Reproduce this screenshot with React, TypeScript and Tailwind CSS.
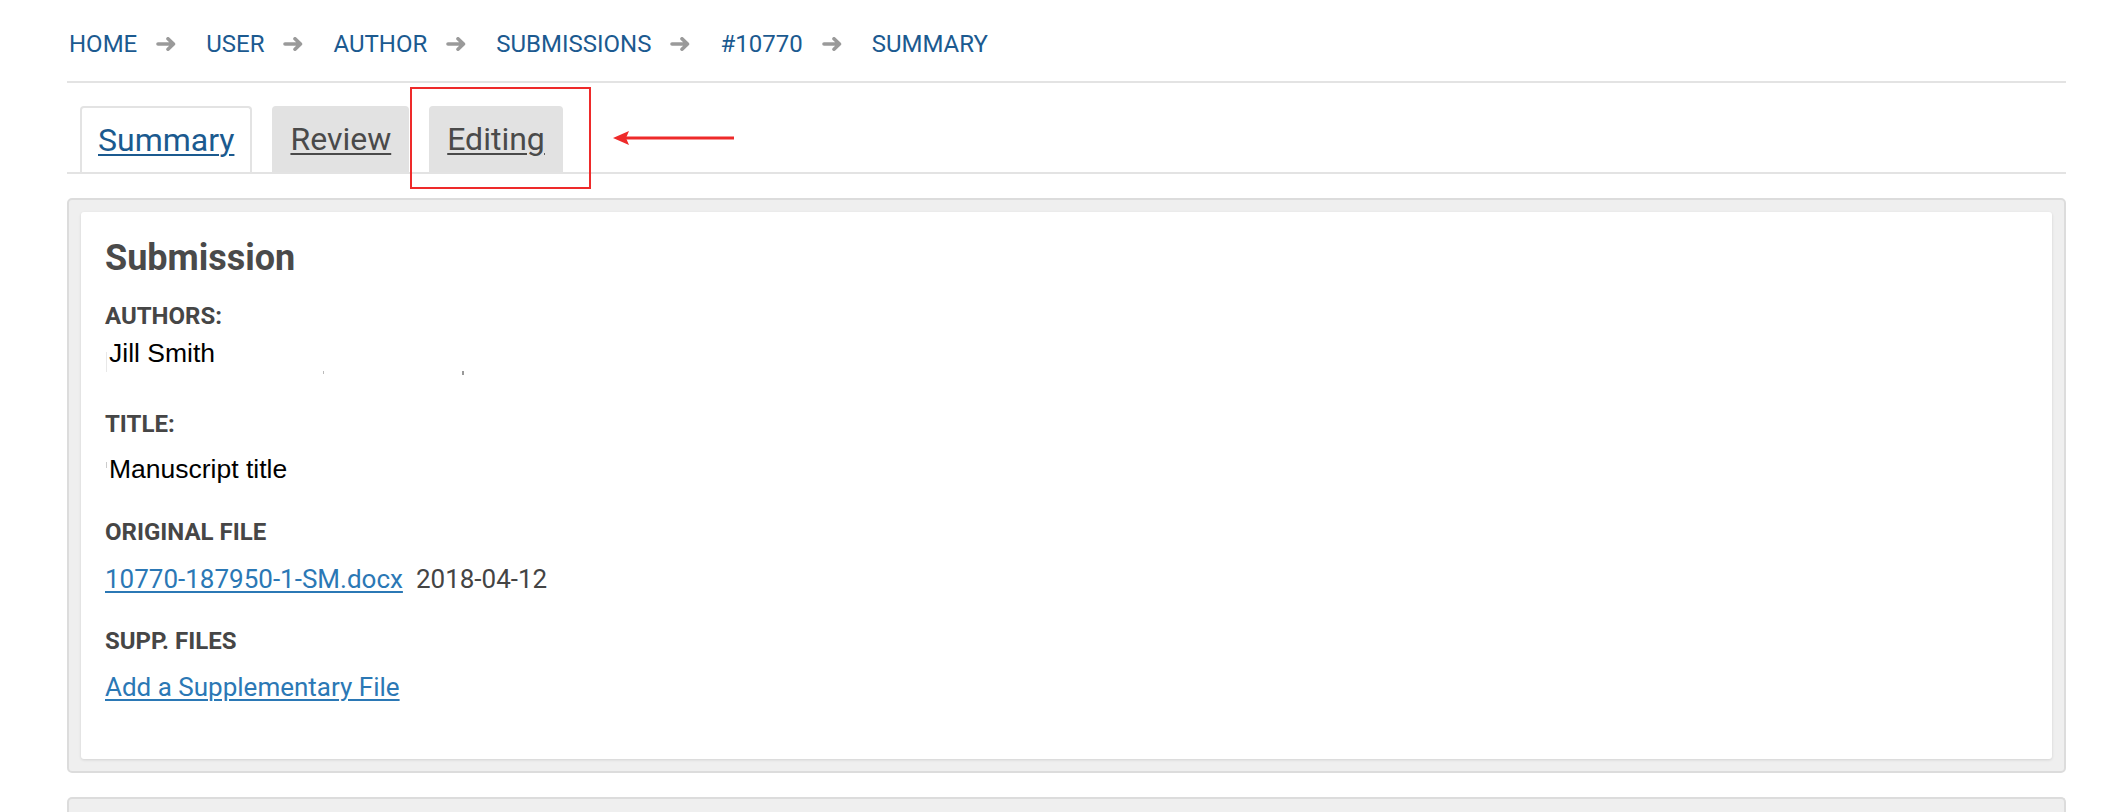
const crumbs = ['HOME', 'USER', 'AUTHOR', 'SUBMISSIONS', '#10770', 'SUMMARY'];

function CrumbArrow() {
  return (
    <svg width="21" height="14" viewBox="0 0 21 14" className="ml-[19px] mr-[29px] shrink-0">
      <path
        d="M2 7 H17.5 M12 1.8 L17.5 7 L12 12.2"
        fill="none"
        stroke="#9a9a9a"
        strokeWidth="3.6"
        strokeLinecap="round"
        strokeLinejoin="round"
      />
    </svg>
  );
}

function Breadcrumb() {
  return (
    <nav className="flex items-center pl-[2px] text-[24px] leading-[28px] text-[#1c5a90]">
      {crumbs.map((c, i) => (
        <div key={c} className="flex items-center">
          <a className="cursor-pointer">{c}</a>
          {i < crumbs.length - 1 && <CrumbArrow />}
        </div>
      ))}
    </nav>
  );
}

function Tabs() {
  return (
    <div className="mt-[23px] flex gap-[20px] pl-[13px] text-[32px]">
      <a className="h-[66px] rounded-t-[4px] border-2 border-b-0 border-[#e3e3e3] bg-white px-[16px] leading-[64px] text-[#1b5a8f] underline decoration-2 underline-offset-[3px]">
        Summary
      </a>
      <a className="h-[66px] rounded-t-[4px] bg-[#e2e2e2] px-[18px] leading-[66px] text-[#4a4a4a] underline decoration-2 underline-offset-[3px]">
        Review
      </a>
      <a className="h-[66px] rounded-t-[4px] bg-[#e2e2e2] px-[18px] leading-[66px] text-[#4a4a4a] underline decoration-2 underline-offset-[3px]">
        Editing
      </a>
    </div>
  );
}

function Label({ text, className }: { text: string; className?: string }) {
  return <div className={`text-[24px] font-bold leading-[28px] text-[#464646] ${className ?? ''}`}>{text}</div>;
}

function SubmissionCard() {
  return (
    <div className="mt-[24px] rounded-[5px] border-2 border-[#dcdcdc] bg-[#efefef] p-[12px]">
      <div className="rounded-[3px] bg-white pb-[57px] pl-[24px] pt-[26px] shadow-[0_1px_3px_rgba(0,0,0,0.12)]">
        <h3 className="text-[36px] font-bold leading-[40px] text-[#4a4a4a]">Submission</h3>

        <Label text="AUTHORS:" className="mt-[24px]" />
        <div className="relative mt-[8px] pl-[4px] font-['Liberation_Sans',Arial,sans-serif] text-[26.5px] leading-[30px] text-black">
          Jill Smith
          <span className="absolute left-[1px] top-[14px] h-[20px] w-px bg-[#e8e8e8]" />
          <span className="absolute left-[218px] top-[33px] h-[3px] w-px bg-[#bbbbbb]" />
          <span className="absolute left-[357px] top-[33px] h-[4px] w-[2px] bg-[#999999]" />
        </div>

        <Label text="TITLE:" className="mt-[42px]" />
        <div className="relative mt-[16px] pl-[4px] font-['Liberation_Sans',Arial,sans-serif] text-[26.5px] leading-[30px] text-black">
          Manuscript title
          <span className="absolute left-[1px] top-[8px] h-[6px] w-px bg-[#cccccc]" />
        </div>

        <Label text="ORIGINAL FILE" className="mt-[34px]" />
        <div className="mt-[18px] flex gap-[13px] text-[26px] leading-[30px]">
          <a className="cursor-pointer text-[#2b78b5] underline decoration-2 underline-offset-[3px]">10770-187950-1-SM.docx</a>
          <span className="text-[#444444]">2018-04-12</span>
        </div>

        <Label text="SUPP. FILES" className="mt-[33px]" />
        <div className="mt-[17px] text-[26px] leading-[30px]">
          <a className="cursor-pointer text-[#2b78b5] underline decoration-2 underline-offset-[3px]">Add a Supplementary File</a>
        </div>
      </div>
    </div>
  );
}

export default function App() {
  return (
    <div className="relative h-[812px] overflow-hidden bg-white font-['Roboto',sans-serif]">
      <div className="ml-[67px] mr-[46px] pt-[30px]">
        <Breadcrumb />
        <div className="mt-[23px] h-[2px] bg-[#e3e3e3]" />
        <Tabs />
        <div className="h-[2px] bg-[#e3e3e3]" />
        <SubmissionCard />
        <div className="mt-[24px] h-[40px] rounded-t-[5px] border-2 border-b-0 border-[#dcdcdc] bg-[#efefef]" />
      </div>

      {/* annotation overlay */}
      <div className="absolute left-[410px] top-[87px] h-[102px] w-[181px] border-2 border-[#ee2a2a]" />
      <svg className="absolute left-[612px] top-[129px]" width="124" height="18" viewBox="0 0 124 18">
        <path d="M14 9 H122" stroke="#ee2a2a" strokeWidth="3" />
        <path d="M1 9 L17 2 L14 9 L17 16 Z" fill="#ee2a2a" />
      </svg>
    </div>
  );
}
